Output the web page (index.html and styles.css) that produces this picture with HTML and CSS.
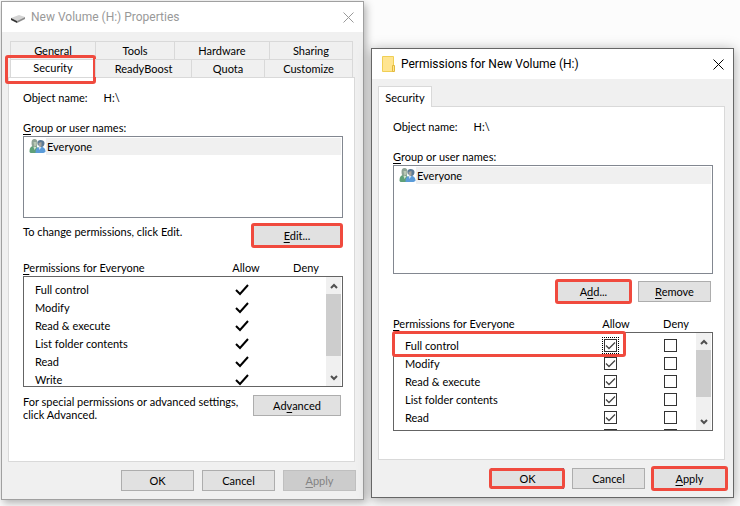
FILE: index.html
```html
<!DOCTYPE html>
<html lang="en">
<head>
    <meta charset="UTF-8">
    <meta name="viewport" content="width=device-width, initial-scale=1.0">
    <title>New Volume (H:) Properties</title>
    <link rel="stylesheet" href="styles.css">
</head>
<body>
    <svg width="0" height="0" class="sprite">
        <symbol id="users" viewBox="0 0 16 15">
            <path d="M0 13c0-4 1-5 3-6h4l2 3v4H1z" fill="#5fa078"/>
            <path d="M4 8l1 3 2-3z" fill="#d5e3d5"/>
            <path d="M2 4c0-3 1-4 3-4s3 1 3 4-1 4-3 4-3-1-3-4z" fill="#8fa396"/>
            <path d="M4 3h3v3l-2 2z" fill="#b9c8b5"/>
            <path d="M6 14c0-4 1-5 3-6h4c2 1 3 2 3 5l-2 1H7z" fill="#5b9bd8"/>
            <path d="M9 8l1 3 2-3z" fill="#cfe2f3"/>
            <path d="M8 4c0-2 1-3 3-3s4 1 4 3-1 4-3 4-4-2-4-4z" fill="#5b7a96"/>
            <path d="M9 4l3-1v4l-1 1c-1 0-2-2-2-4z" fill="#a5a39c"/>
        </symbol>
        <symbol id="tick" viewBox="0 0 14 12">
            <path d="M1 6l4 4 8-9" fill="none" stroke="#000" stroke-width="2"/>
        </symbol>
        <symbol id="up" viewBox="0 0 8 6">
            <path d="M1 5l3-3 3 3" fill="none" stroke="#505050" stroke-width="2"/>
        </symbol>
        <symbol id="down" viewBox="0 0 8 6">
            <path d="M1 1l3 3 3-3" fill="none" stroke="#505050" stroke-width="2"/>
        </symbol>
        <symbol id="close" viewBox="0 0 11 11">
            <path d="M.5.5l10 10M10.5.5l-10 10" fill="none" stroke="currentColor"/>
        </symbol>
    </svg>

    <div class="desktop">
        <section class="window inactive">
            <header class="titlebar">
                <svg class="title-icon" viewBox="0 0 16 16">
                    <path d="M1 9l8-3 6 2-8 4z" fill="#d4d4d4"/>
                    <path d="M1 9l6 3v2l-6-3z" fill="#333"/>
                    <path d="M7 12l8-4v2l-8 4z" fill="#8c8c8c"/>
                </svg>
                <h1>New Volume (H:) Properties</h1>
                <button class="close" aria-label="Close"><svg><use href="#close"/></svg></button>
            </header>
            <div class="window-body">
                <nav class="tabs tabs-back">
                    <button class="tab">General</button>
                    <button class="tab">Tools</button>
                    <button class="tab">Hardware</button>
                    <button class="tab">Sharing</button>
                </nav>
                <nav class="tabs tabs-front">
                    <button class="tab active marked">Security</button>
                    <button class="tab">ReadyBoost</button>
                    <button class="tab">Quota</button>
                    <button class="tab">Customize</button>
                </nav>
                <div class="page">
                    <div class="object"><span>Object name:</span><span>H:\</span></div>
                    <div class="caption"><u>G</u>roup or user names:</div>
                    <div class="listbox">
                        <div class="user"><svg><use href="#users"/></svg><span>Everyone</span></div>
                    </div>
                    <div class="action-row">
                        <p>To change permissions, click Edit.</p>
                        <button class="btn wide marked"><u>E</u>dit...</button>
                    </div>
                    <div class="perm-head"><span><u>P</u>ermissions for Everyone</span><span>Allow</span><span>Deny</span></div>
                    <div class="perm-box">
                        <table class="perms">
                            <tr><td>Full control</td><td><svg class="tick"><use href="#tick"/></svg></td><td></td></tr>
                            <tr><td>Modify</td><td><svg class="tick"><use href="#tick"/></svg></td><td></td></tr>
                            <tr><td>Read &amp; execute</td><td><svg class="tick"><use href="#tick"/></svg></td><td></td></tr>
                            <tr><td>List folder contents</td><td><svg class="tick"><use href="#tick"/></svg></td><td></td></tr>
                            <tr><td>Read</td><td><svg class="tick"><use href="#tick"/></svg></td><td></td></tr>
                            <tr><td>Write</td><td><svg class="tick"><use href="#tick"/></svg></td><td></td></tr>
                        </table>
                        <div class="scrollbar">
                            <svg><use href="#up"/></svg>
                            <div class="track"><div class="thumb"></div></div>
                            <svg><use href="#down"/></svg>
                        </div>
                    </div>
                    <div class="advanced-row">
                        <p>For special permissions or advanced settings,<br>click Advanced.</p>
                        <button class="btn wide">Ad<u>v</u>anced</button>
                    </div>
                </div>
                <footer class="buttons">
                    <button class="btn">OK</button>
                    <button class="btn">Cancel</button>
                    <button class="btn" disabled><u>A</u>pply</button>
                </footer>
            </div>
        </section>

        <section class="window dialog">
            <header class="titlebar">
                <svg class="title-icon" viewBox="0 0 16 16">
                    <path d="M2.500.5h11v15h-11z" fill="#ffe591" stroke="#f0cf55"/>
                    <path d="M12.500 9.500h2v6h-2z" fill="#ffe591" stroke="#e3b93c"/>
                </svg>
                <h1>Permissions for New Volume (H:)</h1>
                <button class="close" aria-label="Close"><svg><use href="#close"/></svg></button>
            </header>
            <div class="window-body">
                <nav class="tabs tabs-single">
                    <button class="tab active">Security</button>
                </nav>
                <div class="page">
                    <div class="object"><span>Object name:</span><span>H:\</span></div>
                    <div class="caption"><u>G</u>roup or user names:</div>
                    <div class="listbox">
                        <div class="user"><svg><use href="#users"/></svg><span>Everyone</span></div>
                    </div>
                    <div class="action-row">
                        <button class="btn marked">A<u>d</u>d...</button>
                        <button class="btn"><u>R</u>emove</button>
                    </div>
                    <div class="perm-head"><span><u>P</u>ermissions for Everyone</span><span>Allow</span><span>Deny</span></div>
                    <div class="perm-wrap">
                        <div class="perm-box">
                            <table class="perms">
                                <tr><td>Full control</td><td><input type="checkbox" class="focused" aria-label="Allow full control" checked></td><td><input type="checkbox" aria-label="Deny full control"></td></tr>
                                <tr><td>Modify</td><td><input type="checkbox" aria-label="Allow modify" checked></td><td><input type="checkbox" aria-label="Deny modify"></td></tr>
                                <tr><td>Read &amp; execute</td><td><input type="checkbox" aria-label="Allow read and execute" checked></td><td><input type="checkbox" aria-label="Deny read and execute"></td></tr>
                                <tr><td>List folder contents</td><td><input type="checkbox" aria-label="Allow list folder contents" checked></td><td><input type="checkbox" aria-label="Deny list folder contents"></td></tr>
                                <tr><td>Read</td><td><input type="checkbox" aria-label="Allow read" checked></td><td><input type="checkbox" aria-label="Deny read"></td></tr>
                                <tr><td></td><td><input type="checkbox" aria-label="Allow write"></td><td><input type="checkbox" aria-label="Deny write"></td></tr>
                            </table>
                            <div class="scrollbar">
                                <svg><use href="#up"/></svg>
                                <div class="track"><div class="thumb"></div></div>
                                <svg><use href="#down"/></svg>
                            </div>
                        </div>
                        <div class="row-mark"></div>
                    </div>
                </div>
                <footer class="buttons">
                    <button class="btn default marked">OK</button>
                    <button class="btn">Cancel</button>
                    <button class="btn marked"><u>A</u>pply</button>
                </footer>
            </div>
        </section>
    </div>
</body>
</html>
```

FILE: styles.css
```css
* {
    box-sizing: border-box;
}

body {
    margin: 0;
    background: #fcfcfc;
    color: #000;
    font-family: Lato, "Liberation Sans", Arial, sans-serif;
    font-size: 11px;
    line-height: 13px;
}

button {
    font: inherit;
    color: inherit;
    padding: 0;
}

p {
    margin: 0;
}

u {
    text-underline-offset: 2px;
}

.sprite {
    position: absolute;
}

.desktop {
    display: grid;
    grid-template-columns: 1fr 1fr;
    align-items: start;
    gap: 7px;
    padding: 1px 6px 6px 1px;
}

/* Windows */
.window {
    background: #f0f0f0;
    border: 1px solid #a0a0a0;
    box-shadow: 2px 3px 8px rgba(0, 0, 0, 0.3);
}

.dialog {
    margin-top: 47px;
    border-color: #666;
    box-shadow: 0 2px 12px rgba(0, 0, 0, 0.35);
}

.titlebar {
    display: flex;
    align-items: center;
    height: 30px;
    padding: 0 9px 0 8px;
    background: #fff;
}

.title-icon {
    width: 16px;
    height: 16px;
}

.titlebar h1 {
    flex: 1;
    margin: 0 0 0 5px;
    font-family: Roboto, "Segoe UI", sans-serif;
    font-size: 12px;
    font-weight: normal;
    line-height: 16px;
}

.inactive .titlebar {
    color: #999;
}

.close {
    display: flex;
    border: 0;
    background: none;
}

.close svg {
    width: 11px;
    height: 11px;
}

.window-body {
    padding: 9px 7px 8px 6px;
}

.dialog .window-body {
    padding-top: 7px;
}

/* Tabs */
.tabs {
    display: grid;
    margin: 0 3px 0 2px;
}

.tabs-back {
    grid-template-columns: 85fr 79fr 95fr 83fr;
    border-right: 1px solid #d9d9d9;
}

.tabs-front {
    grid-template-columns: 85fr 96fr 73fr 88fr;
    border-right: 1px solid #d9d9d9;
}

.tabs-single {
    grid-template-columns: 54px;
    margin: 0;
}

.tab {
    position: relative;
    height: 18px;
    border: 1px solid #d9d9d9;
    border-width: 1px 0 0 1px;
    background: #f0f0f0;
}

.tab.active {
    background: #fff;
    padding-bottom: 3px;
}

.tabs-single .tab {
    height: 21px;
    margin-bottom: -1px;
    border-right-width: 1px;
    padding-bottom: 0;
    z-index: 1;
}

.page {
    margin-right: 1px;
    padding: 13px 11px 40px 14px;
    background: #fff;
    border: 1px solid #d9d9d9;
}

.dialog .page {
    padding-bottom: 28px;
}

.object {
    display: flex;
    gap: 16px;
    margin-bottom: 17px;
}

.caption {
    margin-bottom: 2px;
}

.listbox {
    height: 82px;
    padding: 1px;
    border: 1px solid #828790;
}

.dialog .listbox {
    height: 109px;
}

.user {
    display: flex;
    align-items: center;
    margin-left: 4px;
}

.user svg {
    width: 17px;
    height: 15px;
}

.user span {
    flex: 1;
    padding: 2px 1px;
    background: #f0f0f0;
}

/* Buttons */
.btn {
    position: relative;
    width: 73px;
    height: 21px;
    border: 1px solid #adadad;
    background: #e1e1e1;
}

.btn.wide {
    width: 88px;
}

.btn.default {
    border-color: #0078d7;
}

.btn:disabled {
    background: #ccc;
    border-color: #bfbfbf;
    color: #838383;
}

.buttons {
    display: flex;
    justify-content: flex-end;
    gap: 8px;
    margin-top: 8px;
}

.action-row {
    display: flex;
    align-items: flex-start;
    justify-content: space-between;
    margin: 7px 2px 15px 0;
}

.dialog .action-row {
    justify-content: flex-end;
    gap: 8px;
}

.advanced-row {
    display: flex;
    justify-content: space-between;
    margin: 8px 2px 0 0;
}

/* Red highlights */
.marked::after {
    content: "";
    position: absolute;
    inset: -3px;
    border: 3px solid #f04a3e;
    border-radius: 3px;
}

.btn.default::after {
    inset: -1px -2px -1px -3px;
}

.tab.marked::after {
    inset: -5px -1px -7px -6px;
}

.row-mark {
    position: absolute;
    top: -1px;
    left: -1px;
    right: 87px;
    height: 26px;
    border: 3px solid #f04a3e;
    border-radius: 3px;
}

/* Permissions */
.perm-head {
    display: grid;
    grid-template-columns: 1fr 72px 48px;
    margin: 0 13px 2px 0;
}

.perm-head span + span {
    text-align: center;
}

.perm-wrap {
    position: relative;
}

.perm-box {
    display: flex;
    height: 111px;
    border: 1px solid #646464;
    overflow: hidden;
}

.dialog .perm-box {
    height: 99px;
}

.perms {
    flex: 1;
    align-self: flex-start;
    margin-top: 3px;
    border-collapse: collapse;
    table-layout: fixed;
}

.dialog .perms {
    margin-right: 2px;
}

.perms td {
    height: 18px;
    padding: 0 0 0 11px;
}

.perms td + td {
    width: 72px;
    padding: 0;
    text-align: center;
}

.perms td:last-child {
    width: 48px;
}

.tick {
    display: block;
    width: 14px;
    height: 12px;
    margin: 2px auto 0;
}

input[type="checkbox"] {
    appearance: none;
    display: block;
    width: 13px;
    height: 13px;
    margin: 0 auto;
    border: 1px solid #333;
    background: #fff;
}

input[type="checkbox"]:checked {
    background: #fff url("data:image/svg+xml,%3Csvg xmlns='http://www.w3.org/2000/svg' viewBox='0 0 11 11'%3E%3Cpath d='M1 5.500l3 3 6-6' fill='none' stroke='%23444' stroke-width='1.300'/%3E%3C/svg%3E");
}

.focused {
    outline: 1px dotted #000;
    outline-offset: 1px;
}

.scrollbar {
    display: flex;
    flex-direction: column;
    align-items: center;
    width: 15px;
    margin-right: 1px;
    background: #f0f0f0;
}

.scrollbar svg {
    width: 8px;
    height: 6px;
    margin: 6px 0 5px;
}

.track {
    flex: 1;
    width: 100%;
}

.thumb {
    height: 82%;
    background: #cdcdcd;
}

.dialog .thumb {
    height: 74%;
}
```
